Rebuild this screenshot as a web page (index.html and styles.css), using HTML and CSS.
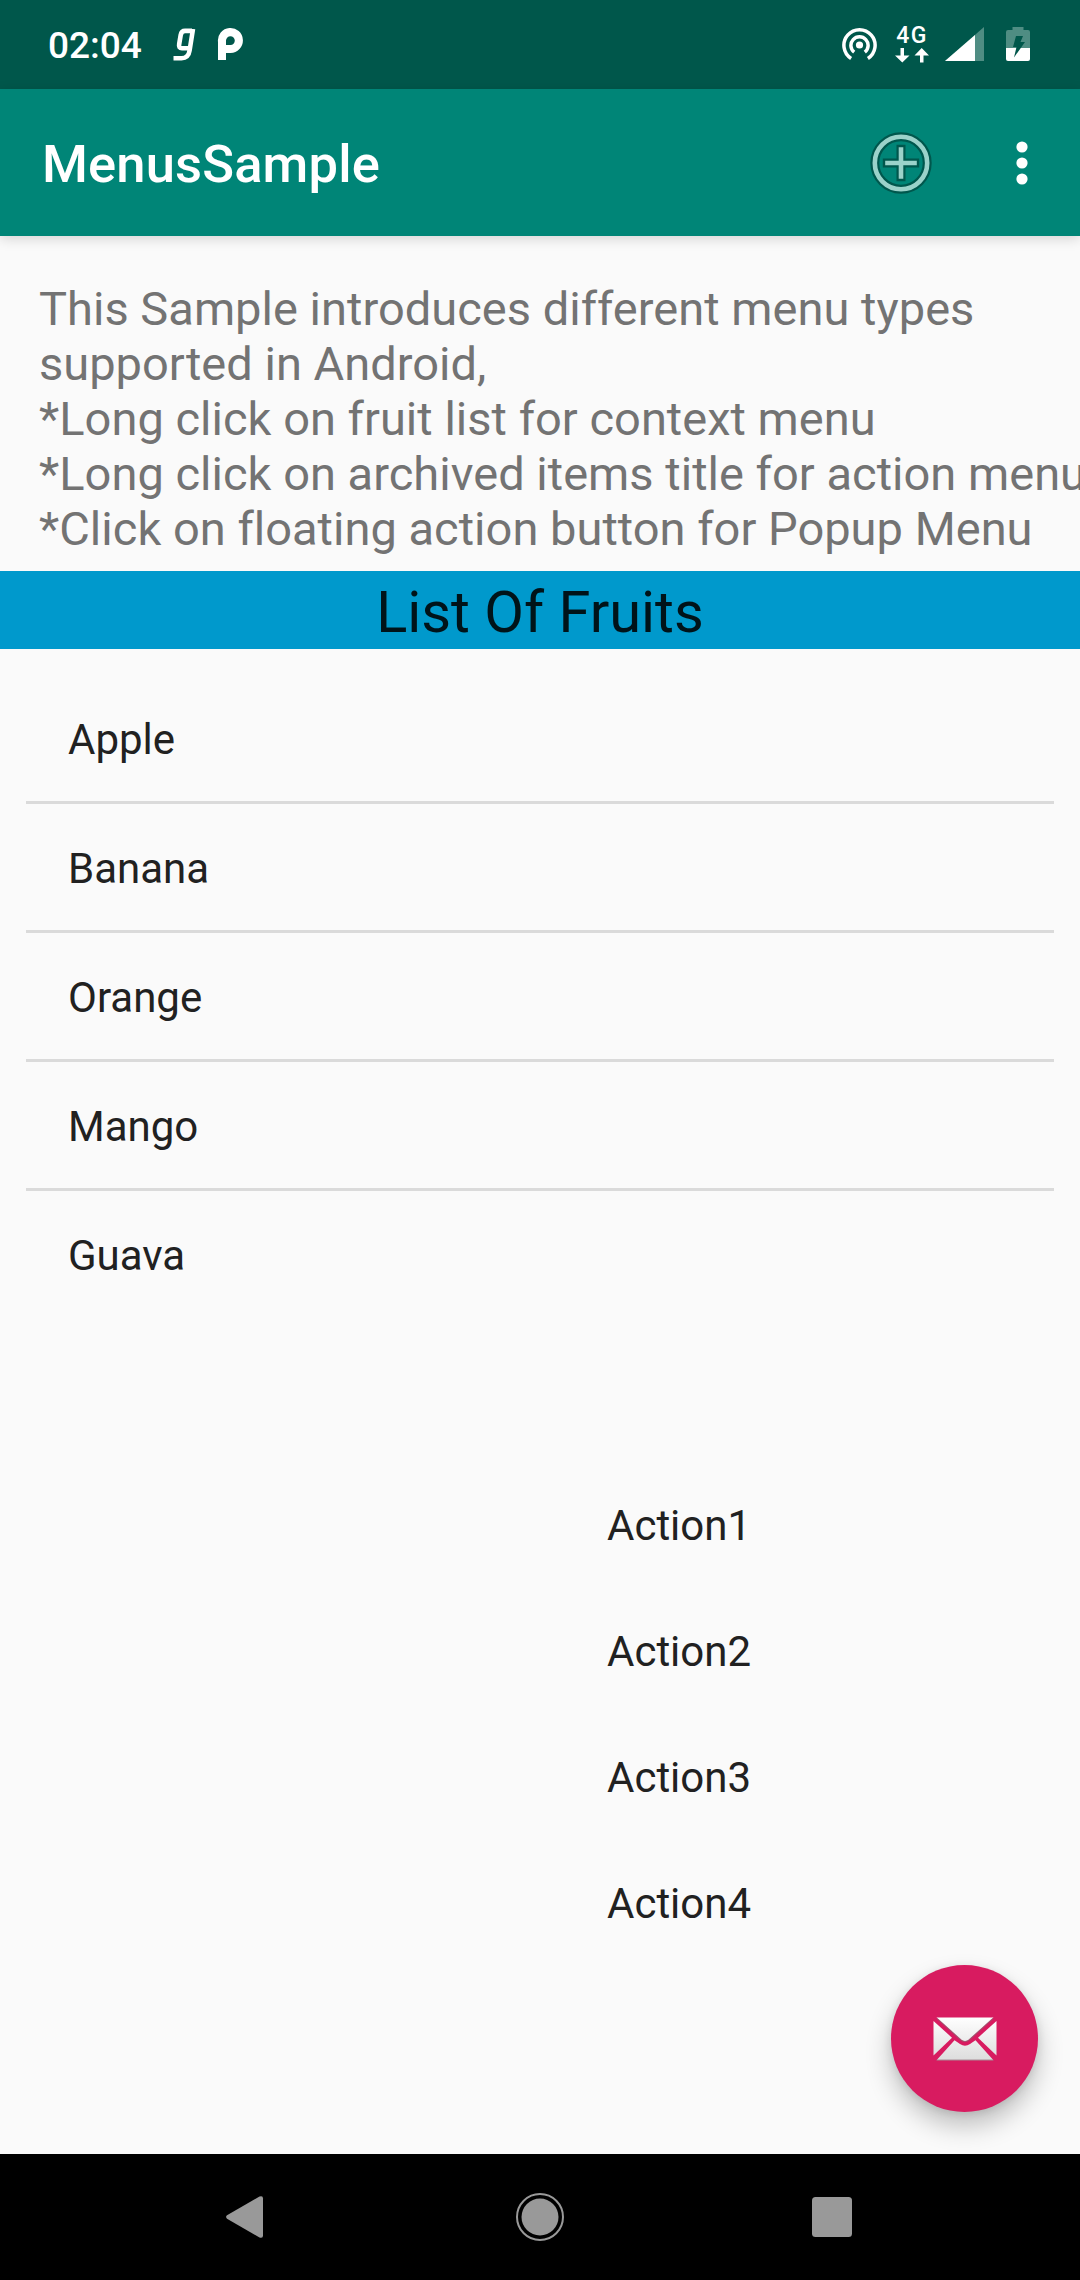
FILE: index.html
```html
<!DOCTYPE html>
<html lang="en">
<head>
<meta charset="utf-8">
<title>MenusSample</title>
<link rel="stylesheet" href="styles.css">
</head>
<body>
<div class="screen">
  <header class="status-bar">
    <span class="clock">02:04</span>
    <svg class="notif" width="76" height="36" viewBox="0 0 76 36">
      <path d="M21 2 17.600 23.500Q16.500 31.200 9.500 31.200H1.500M20 3.900H13Q9.500 3.900 8.700 8L7.200 17Q6.400 21.300 10 21.300H18" fill="none" stroke="#fff" stroke-width="4.600"/>
      <path d="M46 33V15A12.500 12.500 0 1 1 58.500 26H54V33ZM54 18H58.500A4.400 4.400 0 1 0 54 13.500Z" fill="#fff" fill-rule="evenodd"/>
    </svg>
    <div class="spacer"></div>
    <svg class="hotspot" width="36" height="36" viewBox="0 0 36 36" fill="none" stroke="#fff" stroke-width="3.500">
      <circle cx="18.500" cy="18" r="3.600" fill="#fff" stroke="none"/>
      <path d="M13.200 25.200A8.600 8.600 0 1 1 23.800 25.200M10.100 31.500A15.600 15.600 0 1 1 26.900 31.500"/>
    </svg>
    <div class="network">
      <span class="network-label">4G</span>
      <svg width="34" height="15" viewBox="0 0 34 15" fill="#fff"><path d="M5.500 0h3.500v7.500h5.500L7.300 14.500 0 7.500h5.500ZM25 14.500h3.500V7.500H34L26.700 0 19.500 7.500H25Z"/></svg>
    </div>
    <svg class="signal" width="40" height="36" viewBox="0 0 40 36">
      <path d="M39 0V34H0Z" fill="#4f8d83"/><path d="M30 8V34H0Z" fill="#fff"/>
    </svg>
    <svg class="battery" width="24" height="36" viewBox="0 0 24 36">
      <path d="M6.500 0h11v3H22q2 0 2 2V21H0V5q0-2 2-2H6.500Z" fill="#4f8d83"/>
      <path d="M0 21H24V32q0 2-2 2H2q-2 0-2-2Z" fill="#fff"/>
      <path d="M10 9H17L14.500 15H19L8 30.500 10.500 20H7Z" fill="#00574b"/>
    </svg>
  </header>

  <div class="toolbar">
    <h1 class="title">MenusSample</h1>
    <svg class="add" width="64" height="64" viewBox="0 0 64 64" fill="none">
      <g stroke="#00574d" stroke-width="9"><circle cx="32" cy="32" r="26.200"/><path d="M32 13.800V50.200M13.800 32H50.200"/></g>
      <g stroke="#9bd2ca" stroke-width="4.600"><circle cx="32" cy="32" r="26.200"/><path d="M32 16.200V47.800M16.200 32H47.800"/></g>
    </svg>
    <svg class="overflow" width="12" height="44" viewBox="0 0 12 44" fill="#fff"><circle cx="6" cy="6" r="5.600"/><circle cx="6" cy="22" r="5.600"/><circle cx="6" cy="38" r="5.600"/></svg>
  </div>

  <main class="content">
    <p class="intro">This Sample introduces different menu types<br>supported in Android,<br>*Long click on fruit list for context menu<br>*Long click on archived items title for action menu<br>*Click on floating action button for Popup Menu</p>
    <h2 class="list-header">List Of Fruits</h2>
    <ul class="fruits">
      <li>Apple</li><li>Banana</li><li>Orange</li><li>Mango</li><li>Guava</li>
    </ul>
    <ul class="actions">
      <li>Action1</li><li>Action2</li><li>Action3</li><li>Action4</li>
    </ul>
    <button class="fab" aria-label="Mail">
      <svg width="64" height="44" viewBox="0 0 64 44">
        <defs><linearGradient id="paper" x1="0" y1="0" x2="0" y2="44" gradientUnits="userSpaceOnUse"><stop offset="0" stop-color="#fff"/><stop offset="1" stop-color="#dcdcdc"/></linearGradient></defs>
        <g fill="url(#paper)">
          <path d="M3.500 .5H60.500L36 22.500Q32 26 28 22.500Z"/>
          <path d="M.5 4 19 20.700.5 38.500Z"/>
          <path d="M63.500 4 45 20.700 63.500 38.500Z"/>
          <path d="M3.500 43.200 21.500 23.200 27 27Q32 30.500 37 27L42.500 23.200 60.500 43.200Z"/>
        </g>
        <path d="M4 1.400 28 23Q32 26 36 23L60 1.400M3.500 43H60.500" fill="none" stroke="#8a6672" stroke-opacity=".65" stroke-width="1.200"/>
      </svg>
    </button>
  </main>

  <nav class="nav-bar">
    <svg width="38" height="44" viewBox="0 0 38 44"><path d="M1 20.300 33.500 1.500Q37 .2 37 3.500V40.500Q37 43.800 33.500 42.500L1 23.700Q-.8 22 1 20.300Z" fill="#999"/></svg>
    <svg class="home" width="50" height="50" viewBox="0 0 50 50"><circle cx="25" cy="25" r="23" fill="none" stroke="#999" stroke-width="2"/><circle cx="25" cy="25" r="18.500" fill="#999"/></svg>
    <svg width="40" height="40" viewBox="0 0 40 40"><rect width="40" height="40" rx="3.500" fill="#999"/></svg>
  </nav>
</div>
</body>
</html>
```
FILE: styles.css
```css
* { box-sizing: border-box; }
body { margin: 0; font-family: Roboto, "Liberation Sans", sans-serif; }
h1, h2, p, ul { margin: 0; padding: 0; font-weight: 400; list-style: none; }
svg { display: block; flex: none; }

.screen { width: 1080px; height: 2280px; display: flex; flex-direction: column; background: #fafafa; overflow: hidden; }

.status-bar { height: 89px; flex: none; display: flex; align-items: center; padding: 0 50px 0 48px; background: #00574b; color: #fff; }
.clock { font-size: 37px; font-weight: 500; line-height: 44px; margin-top: 3px; }
.notif { margin-left: 30px; }
.spacer { flex: 1; }
.network { width: 34px; height: 36px; margin-left: 18px; display: flex; flex-direction: column; justify-content: space-between; align-items: center; }
.network-label { font-size: 23px; font-weight: 500; line-height: 18px; letter-spacing: 1.5px; }
.signal { margin-left: 16px; }
.battery { margin-left: 21px; }

.toolbar { height: 147px; flex: none; display: flex; align-items: center; padding: 0 52px 0 42px; background: #008577; color: #fff; box-shadow: 0 3px 12px rgba(0,0,0,.15); z-index: 1; }
.title { flex: 1; padding-top: 3px; font-size: 52.5px; font-weight: 500; line-height: 62px; letter-spacing: .15px; }
.overflow { margin-left: 83px; }

.content { flex: 1; position: relative; display: flex; flex-direction: column; }
.intro { padding: 45px 0 15px 39px; font-size: 47px; line-height: 55px; letter-spacing: .02px; color: #737373; white-space: nowrap; }
.list-header { height: 78px; flex: none; background: #0099cc; color: #001319; font-size: 57.75px; line-height: 83px; text-align: center; }
.fruits { margin: 26px 26px 0; font-size: 42px; line-height: 130px; color: #212121; }
.fruits li { height: 129px; padding-left: 42px; border-bottom: 3px solid #dadada; }
.fruits li:last-child { border-bottom: 0; }
.actions { margin: 143px 0 0 607px; font-size: 42px; line-height: 126px; color: #212121; }

.fab { position: absolute; right: 42px; bottom: 42px; width: 147px; height: 147px; padding: 0; border: 0; border-radius: 50%; display: flex; align-items: center; justify-content: center; background: #d81b60; box-shadow: 0 14px 26px rgba(0,0,0,.24), 0 2px 8px rgba(0,0,0,.1); }

.nav-bar { height: 126px; flex: none; display: flex; align-items: center; justify-content: space-between; padding: 0 228px 0 226px; background: #000; }
.home { margin-left: 4px; }
```
